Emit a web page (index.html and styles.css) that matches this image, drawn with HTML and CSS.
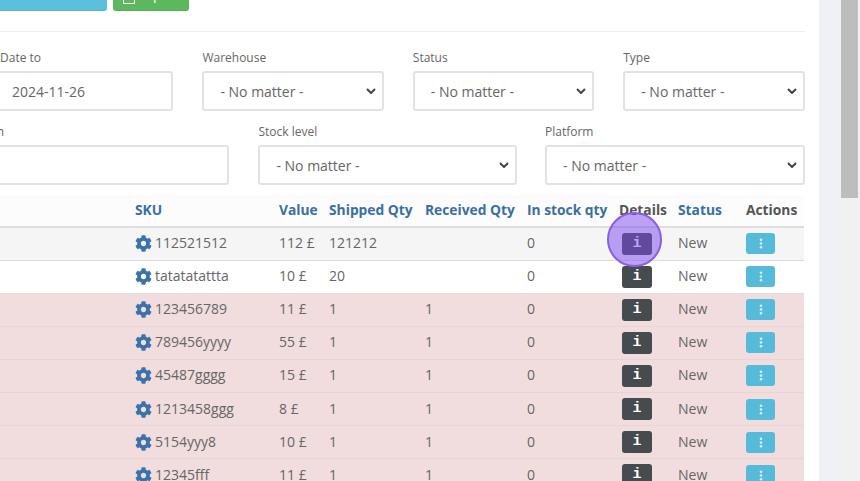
FILE: index.html
```html
<!DOCTYPE html>
<html lang="en">
<head>
<meta charset="utf-8">
<title>Stock movements</title>
<link rel="stylesheet" href="styles.css">
</head>
<body>
<svg class="defs" width="0" height="0" aria-hidden="true">
  <symbol id="gear" viewBox="0 0 512 512"><path d="M487.4 315.7l-42.6-24.6c4.3-23.2 4.3-47 0-70.2l42.6-24.6c4.9-2.8 7.1-8.6 5.5-14-11.1-35.6-30-67.8-54.7-94.6-3.8-4.1-10-5.1-14.8-2.3L380.8 110c-17.9-15.4-38.5-27.3-60.8-35.1V25.8c0-5.6-3.9-10.5-9.4-11.7-36.7-8.2-74.3-7.8-109.2 0-5.5 1.2-9.4 6.1-9.4 11.7V75c-22.2 7.9-42.8 19.8-60.8 35.1L88.7 85.5c-4.9-2.8-11-1.9-14.8 2.3-24.7 26.7-43.6 58.9-54.7 94.6-1.7 5.4.6 11.2 5.5 14L67.3 221c-4.3 23.2-4.3 47 0 70.2l-42.6 24.6c-4.9 2.8-7.1 8.6-5.5 14 11.1 35.6 30 67.8 54.7 94.6 3.8 4.1 10 5.1 14.8 2.3l42.6-24.6c17.9 15.4 38.5 27.3 60.8 35.1v49.2c0 5.6 3.9 10.5 9.4 11.7 36.7 8.2 74.3 7.8 109.2 0 5.5-1.2 9.4-6.1 9.4-11.7v-49.2c22.2-7.9 42.8-19.8 60.8-35.1l42.6 24.6c4.9 2.8 11 1.9 14.8-2.3 24.7-26.7 43.6-58.9 54.7-94.6 1.5-5.5-.7-11.3-5.6-14.1zM256 336c-44.1 0-80-35.9-80-80s35.9-80 80-80 80 35.9 80 80-35.9 80-80 80z"/></symbol>
  <symbol id="dots" viewBox="0 0 4 12"><circle cx="2" cy="2" r="1.4"/><circle cx="2" cy="6" r="1.4"/><circle cx="2" cy="10" r="1.4"/></symbol>
</svg>
<div class="page">
  <main class="main">
    <div class="toolbar">
      <button class="btn btn-blue" type="button"></button>
      <button class="btn btn-green" type="button">
        <svg class="btn-icon" viewBox="0 0 12 12" aria-hidden="true"><rect x="0.5" y="0.5" width="11" height="11"/></svg>
        <span>Export</span>
      </button>
    </div>
    <hr class="rule">
    <div class="filters filters-a">
      <label class="field f-date"><span class="lbl">Date to</span><input class="ctl" type="text" value="2024-11-26"></label>
      <label class="field f-sel"><span class="lbl">Warehouse</span><span class="pick"><select class="ctl"><option>- No matter -</option></select><svg class="chev" viewBox="0 0 10 6" aria-hidden="true"><path d="M1 1l4 4 4-4"/></svg></span></label>
      <label class="field f-sel"><span class="lbl">Status</span><span class="pick"><select class="ctl"><option>- No matter -</option></select><svg class="chev" viewBox="0 0 10 6" aria-hidden="true"><path d="M1 1l4 4 4-4"/></svg></span></label>
      <label class="field f-sel"><span class="lbl">Type</span><span class="pick"><select class="ctl"><option>- No matter -</option></select><svg class="chev" viewBox="0 0 10 6" aria-hidden="true"><path d="M1 1l4 4 4-4"/></svg></span></label>
    </div>
    <div class="filters filters-b">
      <label class="field f-search"><span class="lbl">Search</span><input class="ctl" type="text"></label>
      <label class="field f-stock"><span class="lbl">Stock level</span><span class="pick"><select class="ctl"><option>- No matter -</option></select><svg class="chev" viewBox="0 0 10 6" aria-hidden="true"><path d="M1 1l4 4 4-4"/></svg></span></label>
      <label class="field f-plat"><span class="lbl">Platform</span><span class="pick"><select class="ctl"><option>- No matter -</option></select><svg class="chev" viewBox="0 0 10 6" aria-hidden="true"><path d="M1 1l4 4 4-4"/></svg></span></label>
    </div>
    <table class="grid">
      <colgroup>
        <col class="c0"><col class="c1"><col class="c2"><col class="c3"><col class="c4"><col class="c5"><col class="c6"><col class="c7"><col class="c8">
      </colgroup>
      <thead>
        <tr><th></th><th class="sort">SKU</th><th class="sort">Value</th><th class="sort">Shipped Qty</th><th class="sort">Received Qty</th><th class="sort">In stock qty</th><th>Details</th><th class="sort">Status</th><th>Actions</th></tr>
      </thead>
      <tbody>
        <tr class="hover"><td></td><td><svg class="gear"><use href="#gear"/></svg>112521512</td><td>112 £</td><td>121212</td><td></td><td>0</td><td><button class="info" type="button">i</button></td><td>New</td><td><button class="act" type="button"><svg class="dots"><use href="#dots"/></svg></button></td></tr>
        <tr><td></td><td><svg class="gear"><use href="#gear"/></svg>tatatatattta</td><td>10 £</td><td>20</td><td></td><td>0</td><td><button class="info" type="button">i</button></td><td>New</td><td><button class="act" type="button"><svg class="dots"><use href="#dots"/></svg></button></td></tr>
        <tr class="danger"><td></td><td><svg class="gear"><use href="#gear"/></svg>123456789</td><td>11 £</td><td>1</td><td>1</td><td>0</td><td><button class="info" type="button">i</button></td><td>New</td><td><button class="act" type="button"><svg class="dots"><use href="#dots"/></svg></button></td></tr>
        <tr class="danger"><td></td><td><svg class="gear"><use href="#gear"/></svg>789456yyyy</td><td>55 £</td><td>1</td><td>1</td><td>0</td><td><button class="info" type="button">i</button></td><td>New</td><td><button class="act" type="button"><svg class="dots"><use href="#dots"/></svg></button></td></tr>
        <tr class="danger"><td></td><td><svg class="gear"><use href="#gear"/></svg>45487gggg</td><td>15 £</td><td>1</td><td>1</td><td>0</td><td><button class="info" type="button">i</button></td><td>New</td><td><button class="act" type="button"><svg class="dots"><use href="#dots"/></svg></button></td></tr>
        <tr class="danger"><td></td><td><svg class="gear"><use href="#gear"/></svg>1213458ggg</td><td>8 £</td><td>1</td><td>1</td><td>0</td><td><button class="info" type="button">i</button></td><td>New</td><td><button class="act" type="button"><svg class="dots"><use href="#dots"/></svg></button></td></tr>
        <tr class="danger"><td></td><td><svg class="gear"><use href="#gear"/></svg>5154yyy8</td><td>10 £</td><td>1</td><td>1</td><td>0</td><td><button class="info" type="button">i</button></td><td>New</td><td><button class="act" type="button"><svg class="dots"><use href="#dots"/></svg></button></td></tr>
        <tr class="danger"><td></td><td><svg class="gear"><use href="#gear"/></svg>12345fff</td><td>11 £</td><td>1</td><td>1</td><td>0</td><td><button class="info" type="button">i</button></td><td>New</td><td><button class="act" type="button"><svg class="dots"><use href="#dots"/></svg></button></td></tr>
      </tbody>
    </table>
    <div class="spot" aria-hidden="true"></div>
  </main>
  <aside class="rail" aria-hidden="true">
    <div class="gutter"></div>
    <div class="track"><div class="thumb"></div></div>
  </aside>
</div>
</body>
</html>
```
FILE: styles.css
```css
* { box-sizing: border-box; }
html, body { margin: 0; height: 100%; overflow: hidden; }
body { font-family: "Open Sans", sans-serif; font-size: 14px; color: #666; background: #fff; }
.defs { position: absolute; }
.page { display: flex; width: 860px; height: 481px; }
.main { position: relative; width: 819px; height: 481px; overflow: hidden; padding-right: 14px; background: #fff; }

.toolbar { display: flex; gap: 6px; margin-top: -23px; height: 34px; }
.btn { border: 0; border-bottom: 1px solid rgba(0,0,0,.08); border-radius: 3px; height: 34px; color: #fff; font: 14px "Open Sans", sans-serif; padding: 0; }
.btn-blue { width: 107px; background: #5bc0de; border-radius: 0 3px 3px 0; }
.btn-green { width: 76px; background: #5cb85c; display: flex; align-items: center; gap: 3px; padding-left: 10px; }
.btn-icon { width: 12px; height: 12px; margin-top: 8px; fill: none; stroke: #fff; }
.rule { border: 0; border-top: 1px solid #eee; margin: 20px 0 0; height: 0; width: 805px; }

.filters { display: flex; }
.filters-a { margin-top: 17px; margin-left: -11px; width: 816px; gap: 29px; }
.filters-b { margin-top: 12px; margin-left: -11px; width: 816px; }
.field { display: flex; flex-direction: column; }
.lbl { font-size: 12px; line-height: 17px; margin-bottom: 5px; color: #666; white-space: nowrap; }
.f-date { width: 184.4px; }
.f-date .lbl { padding-left: 11px; }
.f-sel { width: 181.5px; }
.f-sel + .f-sel { margin-left: -0.1px; }
.f-search { width: 240px; }
.f-search .lbl { text-indent: -23px; overflow: hidden; }
.f-stock { width: 258.6px; margin-left: 29.4px; }
.f-plat { width: 259.6px; margin-left: 28px; }
.ctl { display: block; height: 40px; width: 100%; border: 2px solid #e2e2e2; border-radius: 3px; background: #fff; color: #666; font: 14px "Open Sans", sans-serif; padding: 0 14px; outline: 0; }
input.ctl { padding-left: 21px; }
select.ctl { appearance: none; padding-left: 16px; }
.pick { display: block; position: relative; }
.chev { position: absolute; right: 8px; top: 17px; width: 10px; height: 6px; fill: none; stroke: #444; stroke-width: 2; pointer-events: none; }

.grid { table-layout: fixed; border-collapse: collapse; width: 804px; margin-top: 10px; }
.c0 { width: 127px; } .c1 { width: 144px; } .c2 { width: 50px; } .c3 { width: 96px; } .c4 { width: 102px; } .c5 { width: 92px; } .c6 { width: 59px; } .c7 { width: 68px; } .c8 { width: 66px; }
.grid th { height: 32px; padding: 0 0 2px 8px; text-align: left; font-size: 13.8px; font-weight: 700; color: #555; background: #fcfcfc; border-bottom: 2px solid #ddd; white-space: nowrap; }
.grid th.sort { color: #3a6f9f; }
.grid td { height: 33.1px; padding: 0 0 2px 8px; font-size: 14px; color: #666; border-bottom: 1px solid #ddd; white-space: nowrap; vertical-align: middle; }
.hover td { background: #f5f5f5; }
.danger td { background: #f1dddd; border-bottom-color: #e7d5d5; }
.gear { width: 17px; height: 17px; fill: #3a73ab; vertical-align: -4px; margin-right: 3px; }
.info { display: block; width: 30px; height: 22px; margin: 2px 0 0 3px; padding: 0; border: 0; border-radius: 3px; background: #464b4e; color: #fff; font: 700 15px/22px "Liberation Mono", monospace; }
.act { display: block; width: 29px; height: 21px; margin: 2px 0 0; padding: 0; border: 0; border-radius: 3px; background: #56bbdb; }
.dots { display: block; width: 4px; height: 11px; margin: 0 auto; fill: #e4f5fa; }

.spot { position: absolute; left: 607px; top: 212px; width: 55px; height: 55px; border-radius: 50%; background: rgba(122,72,240,.5); border: 2.5px solid #8a5fe3; }

.rail { display: flex; width: 41px; height: 481px; }
.gutter { width: 22px; background: #f0f1f7; }
.track { width: 19px; background: #f1f1f1; padding: 0 2px 0 0; }
.thumb { width: 17px; height: 198px; background: #bdbdbd; }
```
